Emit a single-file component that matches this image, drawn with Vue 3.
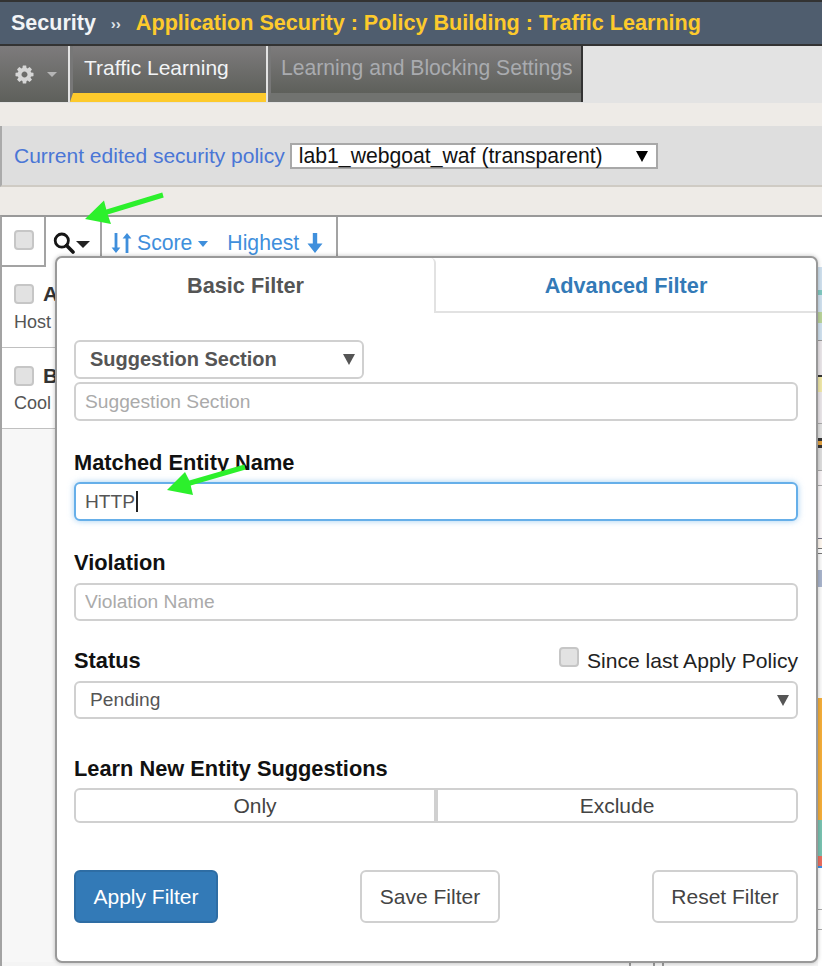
<script setup>
const stripe = [
  [23,'#cfe0ee'],[5,'#7fc8c0'],[17,'#cfe0ee'],[11,'#b9d39a'],[17,'#cfe0ee'],[1,'#999'],[34,'#e9e5e8'],[2,'#333'],
  [15,'#efe7a8'],[31,'#e9e5e8'],[1,'#aaa'],[14,'#e2e2e2'],[3,'#333'],[4,'#e0a040'],[3,'#333'],[22,'#ddd'],[1,'#aaa'],
  [14,'#f7f3f5'],[1,'#aaa'],[52,'#faf7f8'],[1,'#778'],[9,'#fff8f0'],[1,'#777'],[4,'#fff'],[1,'#777'],[16,'#fafafa'],
  [17,'#a8b4cc'],[111,'#fafafa'],[122,'#f4ae3a'],[36,'#78c2b0'],[10,'#ea6e5f'],[2,'#3d8fe8'],[41,'#fff'],[1,'#aaa'],[19,'#fff'],[1,'#aaa']
]
const rows = [
  { title: 'A', sub: 'Host' },
  { title: 'B', sub: 'Cool' }
]
const gear = 'M1152 896q0-106-75-181t-181-75-181 75-75 181 75 181 181 75 181-75 75-181zm512-109v222q0 12-8 23t-20 13l-185 28q-19 54-39 91 35 50 107 138 10 12 10 25t-9 23q-27 37-99 108t-94 71q-12 0-26-9l-138-108q-44 23-91 38-16 136-29 186-7 28-36 28h-222q-14 0-24.5-8.5t-11.5-21.5l-28-184q-49-16-90-37l-141 107q-10 9-25 9-14 0-25-11-126-114-165-168-7-10-7-23 0-12 8-23 15-21 51-66.5t54-70.5q-27-50-41-99l-183-27q-13-2-21-12.5t-8-23.5v-222q0-12 8-23t19-13l186-28q14-46 39-92-40-57-107-138-10-12-10-24 0-10 9-23 26-36 98.5-107.5t94.5-71.5q13 0 26 10l138 107q44-23 91-38 16-136 29-186 7-28 36-28h222q14 0 24.5 8.5t11.5 21.5l28 184q49 16 90 37l142-107q9-9 24-9 13 0 25 10 129 119 165 170 7 8 7 22 0 12-8 23-15 21-51 66.5t-54 70.5q26 50 41 98l183 28q13 2 21 12.5t8 23.5z'
</script>

<template>
  <div class="page">
    <header class="crumb">
      <span class="crumb-root">Security</span>
      <span class="crumb-sep">››</span>
      <span class="crumb-path">Application Security : Policy Building : Traffic Learning</span>
    </header>

    <nav class="tabs">
      <div class="gear-tab">
        <svg class="gear" viewBox="0 0 1792 1792"><path :d="gear" fill="#d6d6d6" /></svg>
        <span class="gear-caret"></span>
      </div>
      <div class="tab active"><span class="tab-label">Traffic Learning</span></div>
      <div class="tab"><span class="tab-label">Learning and Blocking Settings</span></div>
    </nav>

    <section class="policy">
      <span class="policy-label">Current edited security policy</span>
      <div class="policy-select">
        <span>lab1_webgoat_waf (transparent)</span>
        <span class="policy-arrow"></span>
      </div>
    </section>

    <section class="grid">
      <div class="toolbar">
        <div class="cell cell-check"><span class="check"></span></div>
        <div class="cell cell-search">
          <svg class="search" viewBox="0 0 22 22" fill="none" stroke="#151515">
            <circle cx="8.8" cy="8.6" r="6.6" stroke-width="2.8" />
            <path d="M13.6 13.6l6.4 6.4" stroke-width="3.6" stroke-linecap="round" />
          </svg>
          <span class="caret dark"></span>
        </div>
        <div class="cell cell-sort">
          <svg class="sort" viewBox="0 0 21 22" fill="#3f8fdc">
            <path d="M3.6 1h2.8v14.5h3L5 21 .6 15.5h3z" />
            <path d="M14.6 21h2.8V6.5h3L16 1l-4.4 5.5h3z" />
          </svg>
          <span class="sort-text">Score</span>
          <span class="caret blue"></span>
          <span class="sort-text highest">Highest</span>
          <svg class="down" viewBox="0 0 16 22" fill="#3f8fdc">
            <path d="M5.8 1h4.4v10.5h5.3L8 21 .5 11.5h5.300z" />
          </svg>
        </div>
      </div>

      <div class="body">
        <div class="list">
          <div v-for="row in rows" :key="row.title" class="row">
            <div class="row-title"><span class="check"></span><b>{{ row.title }}</b></div>
            <div class="row-sub">{{ row.sub }}</div>
          </div>
          <div class="list-empty"></div>
          <div class="list-foot"><i></i><i></i><i></i></div>
        </div>
        <div class="stripe">
          <div v-for="(s, i) in stripe" :key="i" :style="{ height: s[0] + 'px', background: s[1] }"></div>
        </div>
      </div>
    </section>

    <aside class="pop">
      <div class="pop-tabs">
        <div class="pop-tab on">Basic Filter</div>
        <div class="pop-tab off">Advanced Filter</div>
      </div>
      <form class="form" @submit.prevent>
        <div class="fake-select narrow bold"><span>Suggestion Section</span><span class="sel-arrow"></span></div>
        <input class="input under" placeholder="Suggestion Section" />

        <label class="label l-matched">Matched Entity Name</label>
        <div class="input focus">HTTP<span class="text-caret"></span></div>

        <label class="label l-violation">Violation</label>
        <input class="input violation" placeholder="Violation Name" />

        <div class="status-head">
          <label class="label">Status</label>
          <span class="since"><span class="check"></span>Since last Apply Policy</span>
        </div>
        <div class="fake-select pending"><span>Pending</span><span class="sel-arrow"></span></div>

        <label class="label l-learn">Learn New Entity Suggestions</label>
        <div class="seg">
          <div class="seg-btn">Only</div>
          <div class="seg-btn">Exclude</div>
        </div>

        <div class="actions">
          <button type="button" class="btn primary">Apply Filter</button>
          <button type="button" class="btn save">Save Filter</button>
          <button type="button" class="btn reset">Reset Filter</button>
        </div>
      </form>
    </aside>

    <svg class="arrows" viewBox="0 0 822 966">
      <path d="M162.3 192.6L106.3 209.6 104 200.5 85 219 111 224 107.7 214.4 163.7 197.4Z" fill="#2cf02c" />
      <path d="M244.3 464.6L189.3 480.6 185 472 167 490 193 495 190.7 485.4 245.7 469.4Z" fill="#2cf02c" />
    </svg>
  </div>
</template>

<style>
html, body { margin: 0; padding: 0; }
</style>

<style scoped>
* { box-sizing: border-box; }
.page {
  position: relative;
  width: 822px;
  height: 966px;
  overflow: hidden;
  display: flex;
  flex-direction: column;
  background: #eeebe7;
  font-family: "Liberation Sans", Arial, sans-serif;
  color: #333;
}

.crumb {
  height: 46px;
  flex: none;
  display: flex;
  align-items: center;
  padding-left: 11px;
  background: #4f5d6e;
  border-top: 2px solid #333;
  border-bottom: 2px solid #333;
  font-size: 21.5px;
  font-weight: 700;
}
.crumb-root { color: #f2f4f6; }
.crumb-sep { color: #dfe3e8; font-size: 15px; margin: 0 15px 0 15px; }
.crumb-path { color: #fdca2c; font-size: 21.6px; }

.tabs {
  height: 57px;
  flex: none;
  display: flex;
  background: #e3e3e3;
}
.gear-tab, .tab {
  background: linear-gradient(#7d7b7c, #5e605b);
}
.gear-tab {
  width: 68px;
  display: flex;
  align-items: center;
  padding-left: 14px;
  gap: 12px;
  height: 56px;
}
.gear { width: 21px; height: 21px; flex: none; }
.gear-caret {
  width: 0; height: 0;
  border: 5.5px solid transparent;
  border-top: 5.5px solid #b5b5b5;
  border-bottom: 0;
}
.tab {
  height: 56px;
  border-left: 3px solid #777;
  margin-left: 2px;
  border-bottom: 9px solid #717370;
  display: flex;
  align-items: flex-start;
  padding: 10px 0 0 11px;
  font-size: 21px;
  color: #a9abaf;
  white-space: nowrap;
}
.tab.active { width: 196px; border-bottom-color: #fdca2c; color: #f2f4f6; }
.tab:not(.active) { width: 315px; padding-left: 10px; font-size: 21.15px; }
.tabs::after { content: ""; width: 2px; height: 56px; background: #333; margin-left: -2px; }

.policy {
  margin-top: 23px;
  height: 61px;
  flex: none;
  display: flex;
  align-items: center;
  gap: 5px;
  padding: 1px 0 0 12px;
  background: #dedede;
  border-left: 2px solid #aaa;
  border-bottom: 2px solid #cfcbc4;
}
.policy-label { color: #4a76d6; font-size: 21px; white-space: nowrap; }
.policy-select {
  width: 368px;
  height: 26px;
  display: flex;
  justify-content: space-between;
  align-items: center;
  padding: 0 8px 0 7px;
  background: #fff;
  border: 2px solid #a8a8a8;
  font-size: 21.2px;
  color: #111;
  white-space: nowrap;
}
.policy-arrow {
  width: 0; height: 0;
  border-left: 6px solid transparent;
  border-right: 6px solid transparent;
  border-top: 11px solid #000;
}

.grid {
  margin-top: 28px;
  flex: 1;
  min-height: 0;
  display: flex;
  flex-direction: column;
  border-left: 2px solid #a3a3a3;
  border-top: 2px solid #999;
  background: #fff;
}
.toolbar {
  height: 50px;
  flex: none;
  display: flex;
}
.cell {
  display: flex;
  align-items: center;
  border-right: 2px solid #a3a3a3;
}
.cell-check { width: 44px; padding: 0 0 3px 12px; border-bottom: 2px solid #a3a3a3; }
.cell-search { width: 56px; padding: 2px 0 0 7px; gap: 1px; }
.cell-sort { width: 236px; padding: 2px 0 0 9px; }
.check {
  display: inline-block;
  flex: none;
  width: 20px;
  height: 20px;
  background: #e2e2e2;
  border: 2px solid #c6c6c6;
  border-radius: 4px;
}
.search { width: 22px; height: 22px; flex: none; }
.caret {
  width: 0; height: 0;
  flex: none;
  border-left: 7px solid transparent;
  border-right: 7px solid transparent;
  border-top: 7px solid #222;
}
.caret.dark { border-top-color: #222; margin-top: 3px; }
.caret.blue {
  border-top-color: #3f8fdc;
  border-left-width: 5.5px;
  border-right-width: 5.5px;
  border-top-width: 6px;
  margin: 2px 0 0 6px;
}
.sort { width: 21px; height: 22px; flex: none; margin-right: 5px; }
.sort-text { color: #3f8fdc; font-size: 21.2px; }
.highest { margin-left: 19px; }
.down { width: 16px; height: 22px; flex: none; margin-left: 8px; }

.body {
  flex: 1;
  min-height: 0;
  display: flex;
}
.list {
  flex: 1;
  min-width: 0;
  display: flex;
  flex-direction: column;
}
.row {
  padding: 17px 0 0 12px;
  background: #fff;
  border-bottom: 1px solid #c0c0c0;
  height: 81px;
}
.row + .row { padding-top: 18px; }
.row-title {
  display: flex;
  align-items: center;
  gap: 9px;
  height: 20px;
  font-size: 21px;
  color: #333;
}
.row-sub {
  margin-top: 8px;
  font-size: 18px;
  color: #555;
}
.row + .row .row-sub { margin-top: 7px; }
.list-empty { flex: 1; background: #f7f7f7; }
.list-foot {
  height: 4px;
  flex: none;
  display: flex;
  padding-left: 627px;
  background: #f4f4f4;
}
.list-foot i { width: 2px; background: #999; margin-right: 22px; }
.list-foot i:nth-child(2) { margin-right: 7px; }
.stripe { width: 4px; flex: none; background: #fff; }

.pop {
  position: absolute;
  left: 55px;
  top: 256px;
  width: 763px;
  height: 707px;
  display: flex;
  flex-direction: column;
  background: #fff;
  border: 2px solid #999;
  border-radius: 7px;
  box-shadow: 0 0 4px rgba(0, 0, 0, .25);
}
.pop-tabs { display: flex; height: 55px; flex: none; }
.pop-tab {
  display: flex;
  align-items: center;
  justify-content: center;
  font-weight: 700;
  font-size: 21.7px;
}
.pop-tab.on {
  width: 379px;
  color: #555;
  border-right: 2px solid #e2e2e2;
  border-top-right-radius: 5px;
}
.pop-tab.off {
  flex: 1;
  padding-top: 2px;
  color: #337ab7;
  border-bottom: 2px solid #e2e2e2;
}
.form {
  flex: 1;
  display: flex;
  flex-direction: column;
  padding: 27px 18px 0 17px;
}
.fake-select, .input {
  height: 39px;
  flex: none;
  width: 100%;
  border: 2px solid #d0d0d0;
  border-radius: 6px;
  background: #fff;
  font-family: inherit;
  font-size: 19.2px;
  display: flex;
  align-items: center;
  outline: none;
}
.fake-select {
  justify-content: space-between;
  padding: 0 7px 0 14px;
  color: #555;
}
.fake-select.narrow { width: 290px; }
.fake-select.bold { font-weight: 700; font-size: 20px; }
.sel-arrow {
  width: 0; height: 0;
  border-left: 6px solid transparent;
  border-right: 6px solid transparent;
  border-top: 11px solid #555;
}
.input { padding: 0 9px; color: #555; }
.input::placeholder { color: #aaa; opacity: 1; }
.under { margin-top: 3px; }
.label {
  display: block;
  font-size: 21.8px;
  font-weight: 700;
  color: #111;
  line-height: 26px;
  white-space: nowrap;
}
.l-matched { margin-top: 29px; }
.l-violation { margin-top: 29px; }
.focus {
  margin-top: 6px;
  border-color: #66afe9;
  box-shadow: 0 0 6px rgba(102, 175, 233, .6);
}
.violation { margin-top: 7px; height: 38px; }
.text-caret { width: 1.5px; height: 21px; background: #222; margin-left: 1px; }
.status-head {
  margin-top: 25px;
  height: 35px;
  flex: none;
  display: flex;
  justify-content: space-between;
  align-items: flex-start;
  padding-top: 2px;
}
.since {
  display: flex;
  align-items: flex-start;
  gap: 8px;
  font-size: 21.1px;
  color: #222;
  margin: 1px 0 0 0;
  line-height: 24px;
  white-space: nowrap;
}
.since .check { margin-top: -2px; }
.pending { font-weight: 400; height: 38px; }
.l-learn { margin-top: 37px; }
.seg {
  margin-top: 6px;
  display: flex;
  height: 35px;
  flex: none;
}
.seg-btn {
  flex: 1;
  display: flex;
  align-items: center;
  justify-content: center;
  border: 2px solid #d0d0d0;
  font-size: 21px;
  color: #444;
}
.seg-btn:first-child { border-radius: 6px 0 0 6px; }
.seg-btn:last-child { border-radius: 0 6px 6px 0; }
.actions {
  margin-top: 47px;
  display: flex;
  align-items: flex-start;
}
.btn {
  height: 53px;
  border: 2px solid #d0d0d0;
  border-radius: 6px;
  background: #fff;
  font-family: inherit;
  font-size: 21px;
  color: #444;
  padding: 0;
}
.btn.primary { width: 144px; background: #337ab7; border-color: #2e6da4; color: #fff; }
.btn.save { width: 140px; margin-left: 142px; }
.btn.reset { width: 146px; margin-left: 152px; }

.arrows {
  position: absolute;
  inset: 0;
  width: 822px;
  height: 966px;
  pointer-events: none;
}
</style>
